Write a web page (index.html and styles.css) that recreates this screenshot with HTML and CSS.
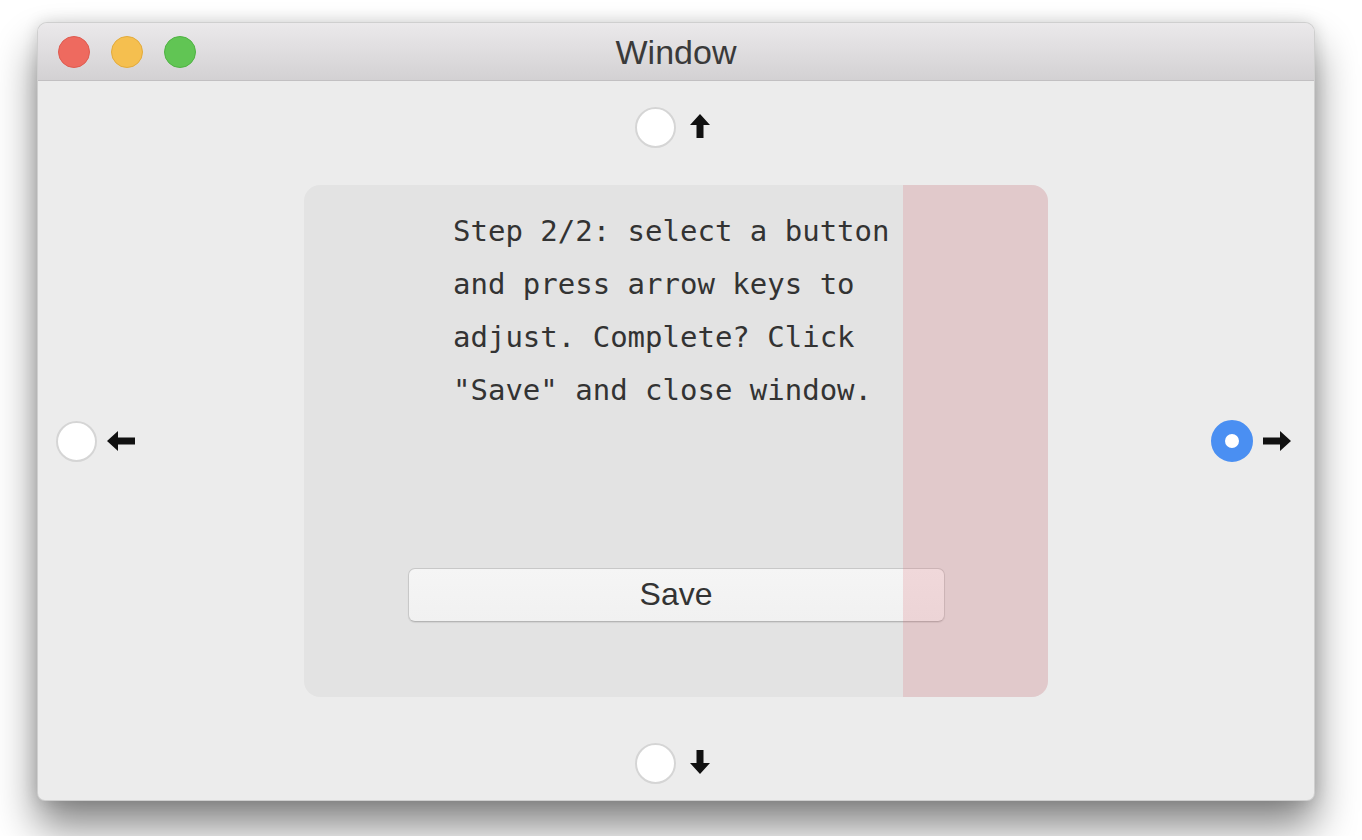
FILE: index.html
```html
<!DOCTYPE html>
<html>
<head>
<meta charset="utf-8">
<title>Window</title>
<link rel="stylesheet" href="styles.css">
</head>
<body>
<div class="stage">
  <div class="window">
    <div class="titlebar">
      <div class="lights">
        <span class="light red"></span>
        <span class="light yellow"></span>
        <span class="light green"></span>
      </div>
      <div class="title">Window</div>
      <div></div>
    </div>
    <div class="content">
      <div class="row-top">
        <div class="choice">
          <span class="radio"></span>
          <svg class="arrow-v" width="22" height="26" viewBox="0 0 22 26"><path d="M11 1 L21 12 L14.5 12 L14.5 25 L7.5 25 L7.5 12 L1 12 Z" fill="#111"/></svg>
        </div>
      </div>
      <div class="row-mid">
        <div class="side left">
          <div class="choice tight">
            <span class="radio"></span>
            <svg width="30" height="22" viewBox="0 0 30 22"><path d="M1 11 L12 1 L12 7.5 L29 7.5 L29 14.5 L12 14.5 L12 21 Z" fill="#111"/></svg>
          </div>
        </div>
        <div class="panel">
          <div class="message">
            <span class="line">Step 2/2: select a button</span>
            <span class="line">and press arrow keys to</span>
            <span class="line">adjust. Complete? Click</span>
            <span class="line">"Save" and close window.</span>
          </div>
          <button class="save">Save</button>
          <div class="overlay"></div>
        </div>
        <div class="side right">
          <div class="choice tight">
            <span class="radio checked"></span>
            <svg width="30" height="22" viewBox="0 0 30 22"><path d="M29 11 L18 1 L18 7.5 L1 7.5 L1 14.5 L18 14.5 L18 21 Z" fill="#111"/></svg>
          </div>
        </div>
      </div>
      <div class="row-bottom">
        <div class="choice">
          <span class="radio"></span>
          <svg class="arrow-v" width="22" height="26" viewBox="0 0 22 26"><path d="M11 25 L21 14 L14.5 14 L14.5 1 L7.5 1 L7.5 14 L1 14 Z" fill="#111"/></svg>
        </div>
      </div>
    </div>
  </div>
</div>
</body>
</html>
```

FILE: styles.css
```css
html, body {
  margin: 0;
  padding: 0;
  background: #ffffff;
}

.stage {
  height: 836px;
  overflow: hidden;
  padding: 22px 0 0 37px;
  box-sizing: border-box;
  background: #ffffff;
}

.window {
  width: 1278px;
  height: 779px;
  box-sizing: border-box;
  background: #ececec;
  border-radius: 10px 10px 8px 8px;
  border: 1px solid rgba(0, 0, 0, 0.12);
  box-shadow: 0 26px 42px rgba(0, 0, 0, 0.48), 0 0 16px rgba(0, 0, 0, 0.14);
  display: flex;
  flex-direction: column;
  overflow: hidden;
}

.titlebar {
  height: 58px;
  flex: none;
  box-sizing: border-box;
  background: linear-gradient(#ebe9eb, #d3d1d3);
  border-bottom: 1px solid #c2c0c2;
  display: grid;
  grid-template-columns: 1fr auto 1fr;
  align-items: center;
}

.lights {
  display: flex;
  gap: 21px;
  padding-left: 20px;
  align-items: center;
}

.light {
  width: 32px;
  height: 32px;
  border-radius: 50%;
  box-sizing: border-box;
}

.red { background: #ee6a5f; border: 1px solid #df5b50; }
.yellow { background: #f5bf4f; border: 1px solid #e3ab3c; }
.green { background: #61c554; border: 1px solid #4fb343; }

.title {
  font-family: "Liberation Sans", Arial, sans-serif;
  font-size: 34px;
  color: #3a3a3a;
  line-height: 1;
  padding-top: 1px;
}

.content {
  flex: 1;
  display: flex;
  flex-direction: column;
}

.row-top {
  height: 104px;
  box-sizing: border-box;
  padding-top: 26px;
  display: flex;
  justify-content: center;
  align-items: flex-start;
  padding-right: 6px;
}

.row-bottom {
  flex: 1;
  box-sizing: border-box;
  padding-top: 46px;
  display: flex;
  justify-content: center;
  align-items: flex-start;
  padding-right: 6px;
}

.row-mid {
  display: grid;
  grid-template-columns: 266px 744px 1fr;
  height: 512px;
}

.side {
  display: flex;
  align-items: center;
}

.side.left {
  padding-left: 18px;
}

.side.right {
  justify-content: flex-end;
  padding-right: 22px;
}

.choice {
  display: flex;
  align-items: center;
  gap: 13px;
}

.choice.tight {
  gap: 9px;
}

.radio {
  width: 41px;
  height: 41px;
  border-radius: 50%;
  box-sizing: border-box;
  background: #ffffff;
  border: 2px solid #d5d5d5;
  display: block;
}

.radio.checked {
  width: 42px;
  height: 42px;
  border: 14px solid #4a8ff2;
  background: #ffffff;
}

.arrow-v {
  margin-top: -3px;
}

.panel {
  position: relative;
  background: #e3e3e3;
  border-radius: 16px;
  overflow: hidden;
  display: flex;
  flex-direction: column;
}

.message {
  margin-left: 149px;
  padding-top: 20px;
  font-family: "DejaVu Sans Mono", "Liberation Mono", monospace;
  font-size: 29px;
  line-height: 53px;
  color: #333333;
  display: flex;
  flex-direction: column;
}

.line {
  white-space: pre;
}

.save {
  margin: auto auto 75px auto;
  width: 537px;
  height: 54px;
  box-sizing: border-box;
  background: linear-gradient(#f5f5f5, #f1f1f1);
  border: 1px solid #c8c8c8;
  border-bottom-color: #b5b5b5;
  border-radius: 7px;
  box-shadow: 0 1px 1px rgba(0, 0, 0, 0.08);
  font-family: "Liberation Sans", Arial, sans-serif;
  font-size: 32px;
  color: #333;
  padding: 0 0 2px 0;
  line-height: 1;
}

.overlay {
  position: absolute;
  top: 0;
  right: 0;
  bottom: 0;
  width: 145px;
  background: rgba(222, 100, 110, 0.2);
}
```
